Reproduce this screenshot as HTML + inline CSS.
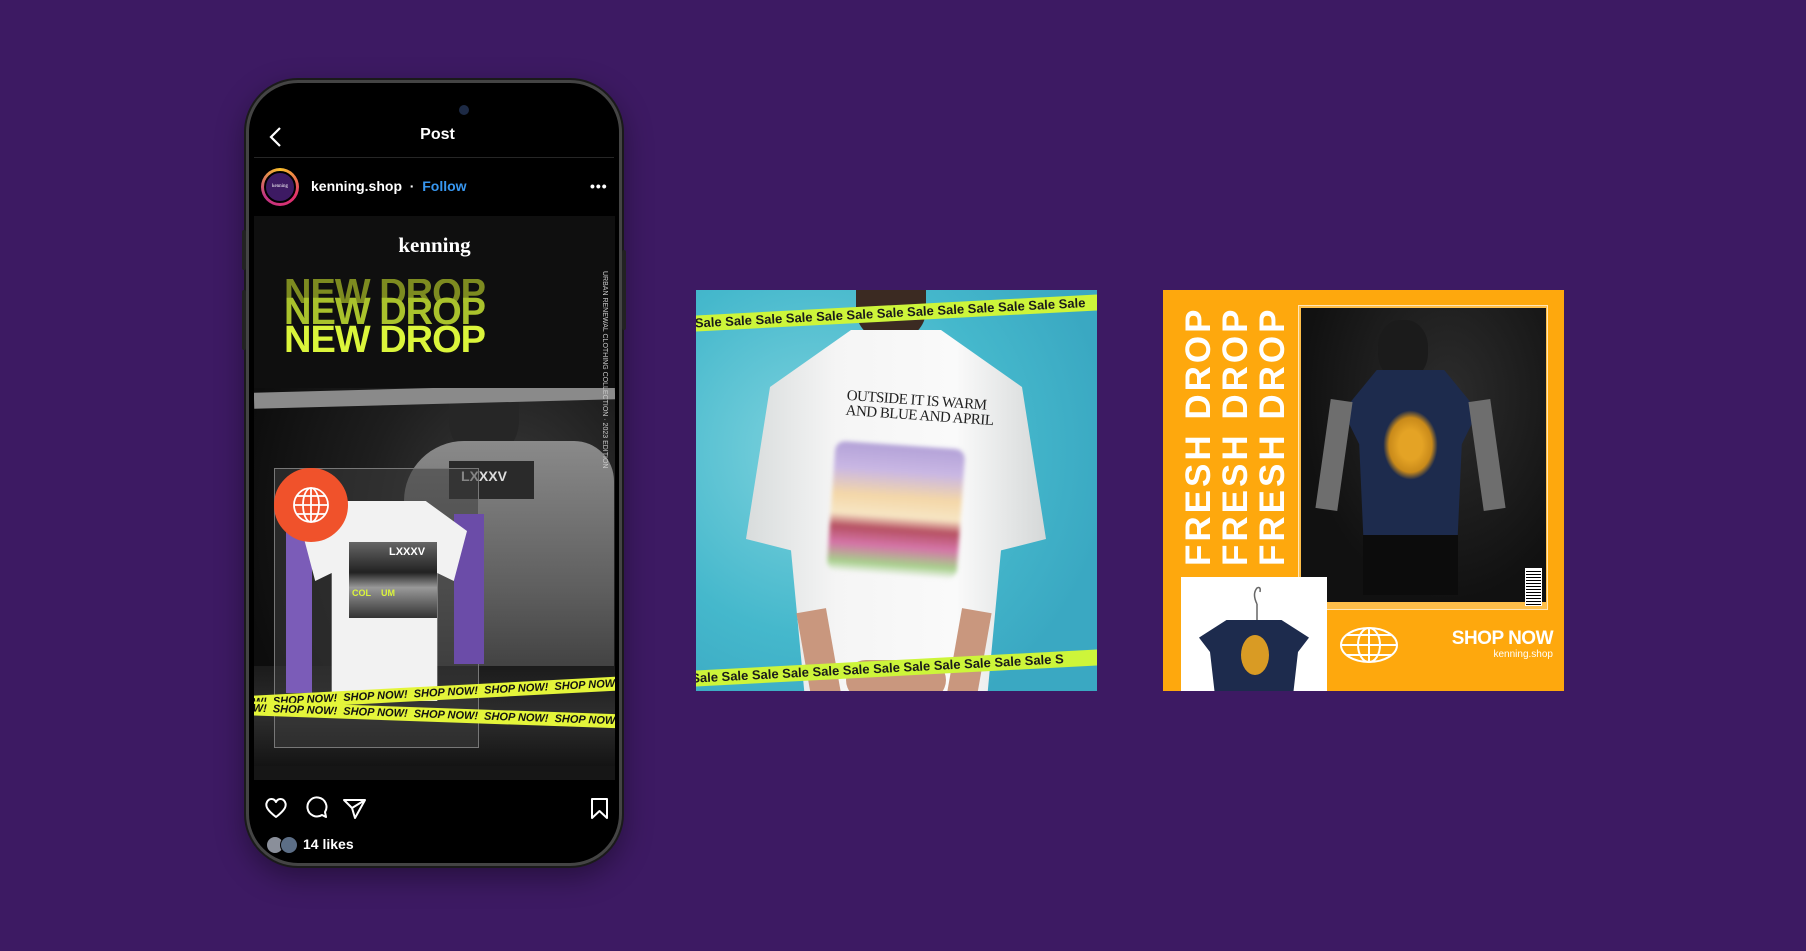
<!DOCTYPE html>
<html><head><meta charset="utf-8"><style>
*{margin:0;padding:0;box-sizing:border-box}
body{width:1806px;height:951px;background:#3d1a63;position:relative;overflow:hidden;font-family:"Liberation Sans",sans-serif}
.abs{position:absolute}
.phone{left:246px;top:80px;width:376px;height:786px;border-radius:52px;background:#000;border:3px solid #444;box-shadow:0 0 0 2px #1a1a1a,0 10px 30px rgba(0,0,0,.4)}
.tape{position:absolute;background:#e4f53a;color:#111;font-weight:bold;font-style:italic;white-space:nowrap;overflow:hidden;font-size:11px;line-height:14px}
.sale{position:absolute;background:#cdf53a;color:#1a1a1a;font-weight:bold;white-space:nowrap;overflow:hidden;font-size:13px;line-height:16px;font-family:"Liberation Sans Narrow","Liberation Sans",sans-serif}
.fresh{position:absolute;color:#fff;font-weight:900;font-size:35px;letter-spacing:3px;transform:rotate(-90deg);transform-origin:left top;white-space:nowrap;line-height:36px}
</style></head><body>

<!-- PHONE -->
<div class="abs phone"></div>
<div class="abs" style="left:242px;top:230px;width:4px;height:40px;background:#222;border-radius:2px"></div>
<div class="abs" style="left:242px;top:290px;width:4px;height:60px;background:#222;border-radius:2px"></div>
<div class="abs" style="left:622px;top:250px;width:4px;height:80px;background:#222;border-radius:2px"></div>
<div class="abs" style="left:459px;top:105px;width:10px;height:10px;border-radius:50%;background:#1d2a45"></div>
<svg class="abs" style="left:268px;top:126px" width="16" height="22"><path d="M12 2 L3 11 L12 20" stroke="#fff" stroke-width="2.2" fill="none"/></svg>
<div class="abs" style="left:400px;top:126px;width:75px;text-align:center;color:#fff;font-weight:bold;font-size:16px">Post</div>
<div class="abs" style="left:254px;top:157px;width:360px;height:1px;background:#262626"></div>
<div class="abs" style="left:261px;top:168px;width:38px;height:38px;border-radius:50%;background:conic-gradient(#f9c02b,#e1306c,#c13584,#f9c02b)"></div>
<div class="abs" style="left:264px;top:171px;width:32px;height:32px;border-radius:50%;background:#3d1a63;border:2px solid #000;color:#fff;font-size:5px;text-align:center;line-height:28px;font-family:'Liberation Serif',serif">kenning</div>
<div class="abs" style="left:311px;top:178px;color:#fff;font-size:14px;font-weight:bold">kenning.shop <span style="font-weight:bold">&nbsp;·&nbsp;</span> <span style="color:#3897f0">Follow</span></div>
<div class="abs" style="left:590px;top:178px;color:#fff;font-size:14px;font-weight:bold;letter-spacing:1px">•••</div>

<!-- post image -->
<div class="abs" style="left:254px;top:216px;width:361px;height:564px;overflow:hidden;background:#121212">
  <div class="abs" style="left:0;top:0;width:361px;height:550px;background:radial-gradient(ellipse at 70% 55%,#3c3c3c 0%,#1e1e1e 40%,#0d0d0d 75%)"></div>
  <!-- man -->
  <div class="abs" style="left:195px;top:150px;width:70px;height:90px;border-radius:40%;background:#262626"></div>
  <div class="abs" style="left:150px;top:225px;width:210px;height:250px;border-radius:60px 40px 0 0;background:linear-gradient(#8a8a8a,#5e5e5e 60%,#3a3a3a)"></div>
  <div class="abs" style="left:195px;top:245px;width:85px;height:38px;background:#2a2a2a"></div>
  <div class="abs" style="left:207px;top:252px;color:#ddd;font-weight:bold;font-size:14px">LXXXV</div>
  <div class="abs" style="left:0;top:450px;width:361px;height:100px;background:linear-gradient(#1b1b1b,#2e2e2e 50%,#141414)"></div>
  <!-- torn strip -->
  <div class="abs" style="left:0;top:172px;width:361px;height:16px;background:#8a8a8a;transform:rotate(-1.5deg)"></div>
  <div class="abs" style="left:0;top:0;width:361px;height:172px;background:#0f0f0f"></div>
  <div class="abs" style="left:0;top:17px;width:361px;text-align:center;color:#fff;font-family:'Liberation Serif',serif;font-weight:bold;font-size:21px">kenning</div>
  <div class="abs" style="left:30px;top:63px;color:#7d8b20;font-weight:900;font-size:38px;line-height:28px;letter-spacing:-1px;height:24px;overflow:hidden">NEW DROP</div>
  <div class="abs" style="left:30px;top:80px;color:#a9c22c;font-weight:900;font-size:38px;line-height:32px;letter-spacing:-1px">NEW DROP</div>
  <div class="abs" style="left:30px;top:106px;color:#dbf53b;font-weight:900;font-size:38px;line-height:36px;letter-spacing:-1px">NEW DROP</div>
  <div class="abs" style="left:354px;top:55px;width:0;height:0">
    <div style="transform:rotate(90deg);transform-origin:left top;white-space:nowrap;color:#ccc;font-size:7px;position:absolute;left:0;top:0">URBAN RENEWAL CLOTHING COLLECTION · 2023 EDITION</div></div>
  <!-- plastic card -->
  <div class="abs" style="left:20px;top:252px;width:205px;height:280px;background:rgba(60,60,60,.55);border:1px solid #777"></div>
  <div class="abs" style="left:32px;top:282px;width:26px;height:195px;background:#7b5cb8"></div>
  <div class="abs" style="left:200px;top:298px;width:30px;height:150px;background:#6b4ca8"></div>
  <!-- tshirt -->
  <div class="abs" style="left:48px;top:285px;width:165px;height:200px;background:#f2f2f2;clip-path:polygon(25% 0,75% 0,100% 15%,92% 40%,82% 36%,82% 100%,18% 100%,18% 36%,8% 40%,0 15%)"></div>
  <div class="abs" style="left:95px;top:326px;width:88px;height:76px;background:linear-gradient(#666,#222 40%,#999 60%,#333)"></div>
  <div class="abs" style="left:135px;top:330px;color:#fff;font-weight:bold;font-size:11px">LXXXV</div>
  <div class="abs" style="left:98px;top:372px;color:#dbf53b;font-weight:bold;font-size:9px">COL&nbsp;&nbsp;&nbsp;&nbsp;UM</div>
  <!-- orange badge -->
  <div class="abs" style="left:20px;top:252px;width:74px;height:74px;border-radius:50%;background:#f0522b;border:3px solid #f0522b"></div>
  <svg class="abs" style="left:37px;top:269px" width="40" height="40"><g stroke="#fff" stroke-width="1.8" fill="none"><circle cx="20" cy="20" r="17"/><ellipse cx="20" cy="20" rx="8" ry="17"/><line x1="3" y1="20" x2="37" y2="20"/><line x1="20" y1="3" x2="20" y2="37"/><path d="M6 11 H34 M6 29 H34"/></g></svg>
  <!-- tapes -->
  <div class="tape" style="left:-10px;top:470px;width:390px;transform:rotate(-3deg)">OW! &nbsp;SHOP NOW! &nbsp;SHOP NOW! &nbsp;SHOP NOW! &nbsp;SHOP NOW! &nbsp;SHOP NOW! &nbsp;SHOP NOW!</div>
  <div class="tape" style="left:-10px;top:492px;width:390px;transform:rotate(2deg)">OW! &nbsp;SHOP NOW! &nbsp;SHOP NOW! &nbsp;SHOP NOW! &nbsp;SHOP NOW! &nbsp;SHOP NOW! &nbsp;SHOP NOW!</div>
  <div class="abs" style="left:0;top:550px;width:361px;height:14px;background:#161616"></div>
</div>

<!-- action icons -->
<svg class="abs" style="left:264px;top:796px" width="350" height="26"><g stroke="#fff" stroke-width="2" fill="none" stroke-linejoin="round">
<path d="M12 21 C3 14 1 10 3 6 C5 2 10 2 12 6 C14 2 19 2 21 6 C23 10 21 14 12 21Z"/>
<path d="M58 19 A9.5 9.5 0 1 1 61 16 L62 21 Z"/>
<path d="M80 4 L101 4 L91 22 L88 12 Z M88 12 L101 4"/>
<path d="M328 3 H343 V22 L335.5 15 L328 22 Z"/></g></svg>
<div class="abs" style="left:266px;top:836px;width:18px;height:18px;border-radius:50%;background:#8a8f9a;border:1px solid #000"></div>
<div class="abs" style="left:280px;top:836px;width:18px;height:18px;border-radius:50%;background:#5c6e86;border:1px solid #000"></div>
<div class="abs" style="left:303px;top:836px;color:#fff;font-weight:bold;font-size:14px">14 likes</div>

<!-- BLUE CARD -->
<div class="abs" style="left:696px;top:290px;width:401px;height:401px;overflow:hidden;background:radial-gradient(circle at 30% 40%,#7fd3de,#45b8cc 50%,#3aa8c2 80%)">
  <div class="abs" style="left:160px;top:0;width:70px;height:50px;background:#3b2a22;border-radius:0 0 30px 30px"></div>
  <div class="abs" style="left:50px;top:40px;width:300px;height:380px;background:linear-gradient(90deg,#d8dcdc,#f5f5f5 30%,#fafafa 70%,#d5d8d8);clip-path:polygon(35% 0,65% 0,92% 15%,100% 55%,85% 58%,80% 100%,20% 100%,15% 58%,0 55%,8% 15%)"></div>
  <div class="abs" style="left:108px;top:320px;width:30px;height:90px;background:#c9977e;transform:rotate(-10deg)"></div>
  <div class="abs" style="left:258px;top:320px;width:30px;height:90px;background:#c9977e;transform:rotate(10deg)"></div>
  <div class="abs" style="left:150px;top:370px;width:100px;height:40px;background:#c9977e;border-radius:20px"></div>
  <div class="abs" style="left:150px;top:104px;color:#222;font-family:'Liberation Serif',serif;font-size:15px;line-height:15px;transform:rotate(4deg);letter-spacing:-.5px">OUTSIDE IT IS WARM<br>AND BLUE AND APRIL</div>
  <div class="abs" style="left:135px;top:155px;width:130px;height:130px;background:linear-gradient(#b3a2d8 0%,#c9b7e4 20%,#f4d7a8 40%,#f7e6c4 55%,#b65062 65%,#d575a8 78%,#a7d08c 92%,#f5f5f5 100%);filter:blur(2px);border-radius:10px;transform:rotate(4deg)"></div>
  <div class="sale" style="left:-5px;top:15px;width:410px;transform:rotate(-3deg)">&nbsp;Sale Sale Sale Sale Sale Sale Sale Sale Sale Sale Sale Sale Sale</div>
  <div class="sale" style="left:-5px;top:370px;width:410px;transform:rotate(-3deg)">Sale Sale Sale Sale Sale Sale Sale Sale Sale Sale Sale Sale S</div>
</div>

<!-- ORANGE CARD -->
<div class="abs" style="left:1163px;top:290px;width:401px;height:401px;overflow:hidden;background:#fea80d">
  <div class="abs" style="left:135px;top:15px;width:250px;height:305px;background:rgba(255,255,255,.25);border:1px solid rgba(255,255,255,.6)"></div>
  <div class="abs" style="left:138px;top:18px;width:245px;height:294px;background:radial-gradient(ellipse at 60% 30%,#2c2c2c,#111 70%)"></div>
  <div class="abs" style="left:215px;top:30px;width:50px;height:60px;border-radius:45%;background:#1b1b1b"></div>
  <div class="abs" style="left:180px;top:80px;width:135px;height:165px;background:#1d2b4d;clip-path:polygon(25% 0,75% 0,100% 25%,88% 45%,85% 100%,15% 100%,12% 45%,0 25%)"></div>
  <div class="abs" style="left:160px;top:110px;width:22px;height:110px;background:#6e6e6e;transform:rotate(8deg)"></div>
  <div class="abs" style="left:313px;top:110px;width:22px;height:110px;background:#6e6e6e;transform:rotate(-8deg)"></div>
  <div class="abs" style="left:200px;top:245px;width:95px;height:60px;background:#0c0c0c"></div>
  <div class="abs" style="left:220px;top:120px;width:55px;height:70px;border-radius:50%;background:radial-gradient(#e4a325 30%,#c98a1a 55%,transparent 70%)"></div>
  <div class="abs" style="left:362px;top:278px;width:17px;height:38px;background:repeating-linear-gradient(0deg,#000 0 1px,#fff 1px 3px);border:1px solid #fff"></div>
  <div class="abs" style="left:18px;top:287px;width:146px;height:114px;background:#fff"></div>
  <div class="abs" style="left:36px;top:330px;width:110px;height:80px;background:#1d2b4d;clip-path:polygon(25% 0,75% 0,100% 22%,90% 40%,85% 100%,15% 100%,10% 40%,0 22%)"></div>
  <div class="abs" style="left:78px;top:345px;width:28px;height:40px;border-radius:50%;background:#d99b24"></div>
  <svg class="abs" style="left:87px;top:294px" width="14" height="36"><path d="M7 36 V20 M7 20 Q2 10 7 4 Q11 2 10 8" stroke="#666" stroke-width="1.5" fill="none"/></svg>
  <div class="fresh" style="left:18px;top:276px">FRESH&nbsp;DROP</div>
  <div class="fresh" style="left:55px;top:276px">FRESH&nbsp;DROP</div>
  <div class="fresh" style="left:92px;top:276px">FRESH&nbsp;DROP</div>
  <svg class="abs" style="left:175px;top:335px" width="62" height="40"><g stroke="#fff" stroke-width="2" fill="none"><ellipse cx="31" cy="20" rx="28" ry="17"/><ellipse cx="31" cy="20" rx="11" ry="17"/><line x1="3" y1="20" x2="59" y2="20"/><line x1="31" y1="3" x2="31" y2="37"/><path d="M9 10 H53 M9 30 H53"/></g></svg>
  <div class="abs" style="left:260px;top:338px;width:130px;text-align:right;color:#fff;font-weight:bold;font-size:19px;letter-spacing:-.5px">SHOP NOW</div>
  <div class="abs" style="left:260px;top:359px;width:130px;text-align:right;color:#fff;font-size:10px">kenning.shop</div>
</div>
</body></html>
